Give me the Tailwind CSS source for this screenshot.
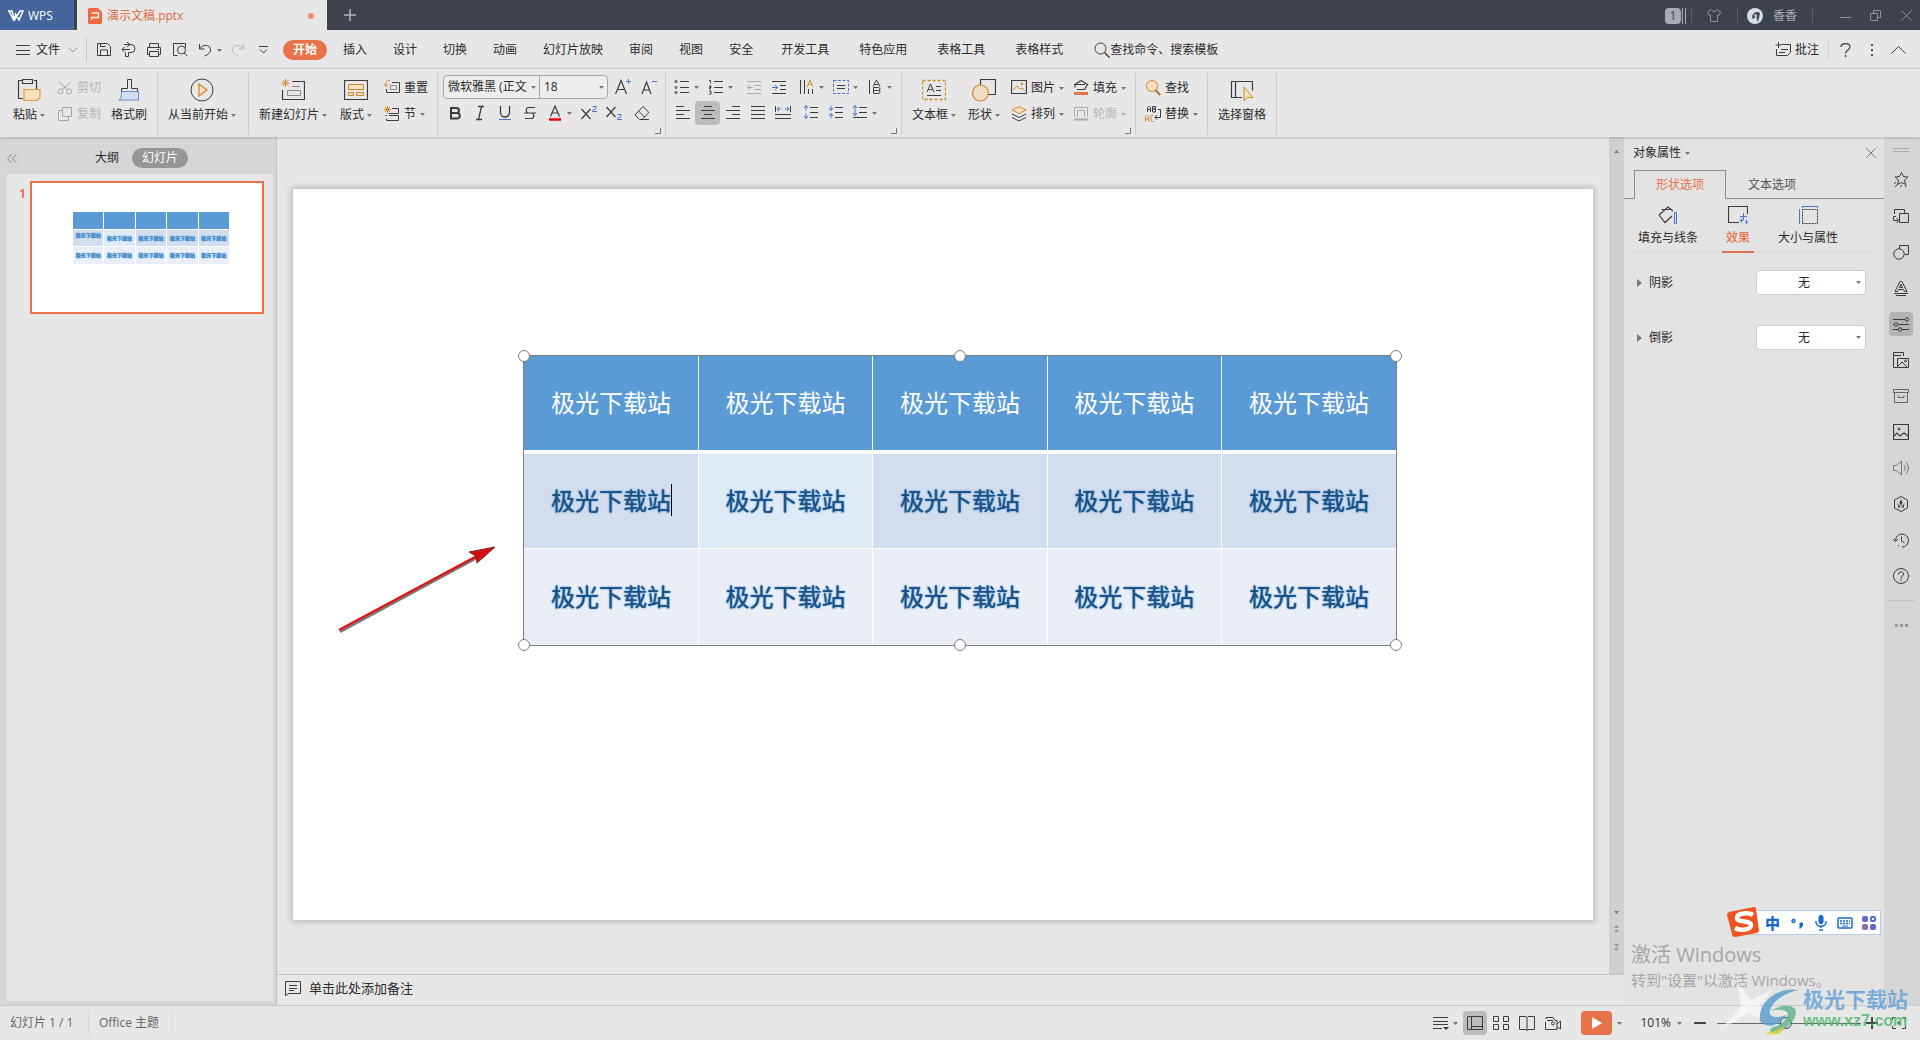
<!DOCTYPE html>
<html lang="zh-CN">
<head>
<meta charset="utf-8">
<title>演示文稿.pptx - WPS</title>
<script src="https://cdn.jsdelivr.net/npm/@tailwindcss/browser@4"></script>
</head>
<body class="relative flex min-h-screen flex-col overflow-x-hidden bg-[#e7e7e7] fill-none stroke-[#3c3c3c] font-['Open_Sans','Noto_Sans_CJK_SC',sans-serif] text-xs leading-4 text-[#2b2b2b]">

<svg class="hidden">
  <symbol id="caret" viewBox="0 0 5 3"><path d="M0 0h5L2.5 3z" fill="#777" stroke="none"/></symbol>
  <symbol id="corner" viewBox="0 0 6 6"><path d="M5.500 0v5.500H0" stroke="#777"/></symbol>
</svg>

<!-- Title bar -->
<header class="flex h-[30px] shrink-0 items-center bg-[#3e424d] text-[#a9abb2]">
  <button class="flex h-full w-[74px] items-center gap-1 bg-[#46659c] pl-2 pt-px text-white stroke-white">
    <svg class="h-[11px] w-4" viewBox="0 0 16 11" stroke-width="1.500"><path d="M0 1h4l2.500 9L12 1h3l-4 9-4-7M1 1l4.500 9L8 5"/></svg>
    WPS
  </button>
  <div class="ml-[3px] flex h-full w-[250px] items-center bg-[#e7e7e7] pl-[11px] pt-[2px] text-[#dc6b45]">
    <svg class="h-4 w-[14px]" viewBox="0 0 14 16"><path d="M1 0h9l4 4v11l-1 1H1l-1-1V1z" fill="#f0683e" stroke="none"/><path d="M3.500 5h7v4.500h-7V12" stroke="#fff" stroke-width="1.300"/></svg>
    <span class="ml-[5px]">演示文稿.pptx</span>
    <span class="ml-auto mr-[13px] size-1.5 rounded-full bg-[#f0905c]"></span>
  </div>
  <button class="ml-[17px]" aria-label="新建"><svg class="size-3 stroke-[#b5b7bd]" viewBox="0 0 12 12" stroke-width="1.500"><path d="M6 0v12M0 6h12"/></svg></button>
  <div class="ml-auto flex h-full items-center stroke-[#8f929b] pt-px">
    <span class="h-4 w-4 rounded-sm bg-[#a8abb2] text-center text-[#3e424d]">1</span>
    <span class="ml-px h-4 w-1 border-x border-[#a8abb2]"></span>
    <span class="ml-[5px] h-[15px] w-px bg-[#5b5f69]"></span>
    <svg class="ml-[15px] h-[13px] w-[14px]" viewBox="0 0 14 13"><path d="M4 .500C5 3 9 3 10 .500l3.500 2.500-1 3h-2v6.500h-7V6h-2l-1-3z"/></svg>
    <span class="ml-4 h-[15px] w-px bg-[#5b5f69]"></span>
    <svg class="ml-[9px] size-4" viewBox="0 0 16 16"><circle cx="8" cy="8" r="8" fill="#d6dfe2" stroke="none"/><path d="M5 9c1-5 5-6 8-4l-1 5-1 4c-1-2-2-4-1-6l-4 3z" fill="#444a55" stroke="none"/><circle cx="8.500" cy="7.500" r="1.500" fill="#e8b8b0" stroke="none"/></svg>
    <span class="ml-[10px]">香香</span>
    <span class="ml-[15px] h-[15px] w-px bg-[#5b5f69]"></span>
    <button class="ml-[27px]" aria-label="最小化"><svg class="h-[11px] w-[11px]" viewBox="0 0 11 11"><path d="M0 7.500h11"/></svg></button>
    <button class="ml-[19px]" aria-label="还原"><svg class="h-[11px] w-[11px]" viewBox="0 0 11 11"><path d="M.500 3.500h7v7h-7zM3.500 3.500v-3h7v7h-3"/></svg></button>
    <button class="ml-5 mr-2" aria-label="关闭"><svg class="h-[11px] w-[11px]" viewBox="0 0 11 11"><path d="M.500.500l10 10M10.500.500l-10 10"/></svg></button>
  </div>
</header>

<!-- Menu bar -->
<nav class="flex h-[39px] shrink-0 items-center border-b border-[#cfcfcf] pl-4 pt-[2px]">
  <button class="flex items-center gap-1.5"><svg class="h-[10px] w-[14px]" viewBox="0 0 14 10"><path d="M0 .500h14M0 5.500h14M0 9.500h14"/></svg>文件<svg class="ml-[2px] h-[6px] w-[10px] stroke-[#999]" viewBox="0 0 10 6"><path d="M.500.500L5 5 9.500.500"/></svg></button>
  <span class="ml-[8px] h-6 w-px bg-[#c8c8c8]"></span>
  <button class="ml-[9px]" aria-label="保存"><svg class="size-4" viewBox="0 0 16 16"><path d="M1.500 1.500h10l3 3v9h-13zM4.500 13V8h7v5M4.500 1.500v3h5"/></svg></button>
  <button class="ml-[9px]" aria-label="输出"><svg class="size-4" viewBox="0 0 16 16"><path d="M3 2.500h7a4 4 0 010 8H7.500v4h-3v-4M6 0l3 2.500L6 5M1 7.500h8M3.500 5L1 7.500 3.500 10"/></svg></button>
  <button class="ml-[9px]" aria-label="打印"><svg class="size-4" viewBox="0 0 16 16"><path d="M3.500 5V1.500h9V5M3.500 12.500h-2v-7h13v7h-2M3.500 9.500h9v5h-9zM11 7.500h2"/></svg></button>
  <button class="ml-[10px]" aria-label="打印预览"><svg class="size-4" viewBox="0 0 16 16"><path d="M5.500 13.500h-4v-12h12v4M12 11l3.500 3"/><circle cx="9.500" cy="8" r="4"/></svg></button>
  <button class="ml-[9px] flex items-center gap-[4px]" aria-label="撤销"><svg class="size-4" viewBox="0 0 16 16"><path d="M2.500 2v5h5M2.500 7c3-5 11-5 11 1 0 3-3 5-6 6"/></svg><svg class="h-[3px] w-[5px]"><use href="#caret"/></svg></button>
  <button class="ml-[9px]" aria-label="恢复"><svg class="size-4 stroke-[#bbb]" viewBox="0 0 16 16"><path d="M12.500 2v5h-5M12.500 7C9.500 2 1.500 2 1.500 8c0 3 3 5 6 6"/></svg></button>
  <button class="ml-[12px]" aria-label="自定义"><svg class="h-[8px] w-[9px]" viewBox="0 0 9 8"><path d="M0 .500h9M1 3.500l3.500 3.500L8 3.500"/></svg></button>
  <button class="ml-[15px] h-5 w-11 rounded-full bg-[#e8734a] font-bold text-white">开始</button>
  <div class="ml-4 flex gap-[26px]"><button>插入</button><button>设计</button><button>切换</button><button>动画</button><button>幻灯片放映</button><button>审阅</button><button>视图</button><button>安全</button></div>
  <div class="ml-7 flex gap-[30px]"><button>开发工具</button><button>特色应用</button><button>表格工具</button><button>表格样式</button></div>
  <button class="ml-[31px] flex items-center"><svg class="size-4" viewBox="0 0 16 16"><circle cx="6.500" cy="6.500" r="5.500"/><path d="M10.500 10.500l5 5" stroke-width="1.500"/></svg>查找命令、搜索模板</button>
  <div class="ml-auto flex items-center pr-[14px]">
    <button class="flex items-center gap-1"><svg class="size-4" viewBox="0 0 16 16"><path d="M6 2.500h9.500v8l-3 3H1.500V7M3.500 0v6M.500 3H6M6 7.500h7M4 10.500h6"/></svg>批注</button>
    <span class="ml-[9px] h-5 w-px bg-[#cfcfcf]"></span>
    <button class="ml-[11px]" aria-label="帮助"><svg class="h-[14px] w-[11px]" viewBox="0 0 11 14" stroke-width="1.200"><path d="M1 4c0-4.500 9-4.500 9 0 0 3-4.500 3-4.500 6.500M5.500 12v2"/></svg></button>
    <button class="ml-[20px]" aria-label="更多"><svg class="h-3 w-[2px]" viewBox="0 0 2 12"><path d="M0 0h2v2H0zM0 5h2v2H0zM0 10h2v2H0z" fill="#555" stroke="none"/></svg></button>
    <button class="ml-[18px]" aria-label="收起功能区"><svg class="h-[8px] w-[15px]" viewBox="0 0 15 8"><path d="M.500 7.500l7-7 7 7"/></svg></button>
  </div>
</nav>

<!-- Ribbon -->
<div class="relative z-10 flex h-[68px] shrink-0 items-start bg-[#e7e7e7] pt-1 shadow-[0_1px_3px_rgba(0,0,0,0.2)]">
  <div class="flex h-[62px] w-[158px] border-r border-[#cdcdcd] pl-[13px]">
    <button class="flex flex-col items-center gap-[5px] pt-[5px]"><svg class="size-6" viewBox="0 0 24 24" stroke-width="1.200"><path d="M5 2.500H1.500v18H6M17 2.500h2.500V11M5.500 1.500h10v4h-10z"/><path d="M7 11.500h16v8l-3 3H7z" fill="#f8dfc0" stroke="#d99a45"/></svg><span class="flex items-center gap-[3px]">粘贴<svg class="h-[3px] w-[5px]"><use href="#caret"/></svg></span></button>
    <div class="ml-3 flex flex-col gap-[2px] pt-[3px] text-[#b5b5b5] stroke-[#a5a5a5]">
      <button class="flex h-6 items-center gap-1"><svg class="size-4" viewBox="0 0 16 16"><circle cx="3.500" cy="11.500" r="2.500"/><circle cx="12" cy="11.500" r="2.500"/><path d="M2 2l8.500 7.500M14 2L5 9.500"/></svg>剪切</button>
      <button class="flex h-6 items-center gap-1"><svg class="size-4" viewBox="0 0 16 16"><path d="M5.500 1.500h9v9h-9zM5.500 4.500h-4v10h10v-4"/></svg>复制</button>
    </div>
    <button class="ml-[10px] flex flex-col items-center gap-[5px] pt-[5px]"><svg class="size-6" viewBox="0 0 24 24"><path d="M4.500 13.500h17v8.500H2c2-2 2.500-4 2.500-8.500z" fill="#cfe0f2" stroke="#6c8fc9"/><path d="M4.500 13.500v-3h6v-9h4v9h6v3"/></svg>格式刷</button>
  </div>
  <div class="flex h-[62px] w-[91px] border-r border-[#cdcdcd] pl-[10px]">
    <button class="flex flex-col items-center gap-[5px] pt-[5px]"><svg class="size-6" viewBox="0 0 24 24"><circle cx="12" cy="12" r="11"/><path d="M9 6v12l8-6z" fill="#f8dfc0" stroke="#d08a2c" stroke-width="1.300"/></svg><span class="flex items-center gap-[3px]">从当前开始<svg class="h-[3px] w-[5px]"><use href="#caret"/></svg></span></button>
  </div>
  <div class="flex h-[62px] w-[189px] border-r border-[#cdcdcd] pl-[10px]">
    <button class="flex flex-col items-center gap-[5px] pt-[5px]"><svg class="size-6" viewBox="0 0 24 24"><path d="M11 3.500h12.500v18h-22V12" stroke-width="1.200"/><path d="M6.500 12.500h13v5h-13zM11 8.500h8" stroke="#888"/><path d="M4.500 1v8M.500 5h8M1.500 2l6 6M7.500 2l-6 6" stroke="#d08a2c"/></svg><span class="flex items-center gap-[3px]">新建幻灯片<svg class="h-[3px] w-[5px]"><use href="#caret"/></svg></span></button>
    <button class="ml-[13px] flex flex-col items-center gap-[5px] pt-[5px]"><svg class="size-6" viewBox="0 0 24 24"><path d="M.500 2.500h23v19H.500z" stroke-width="1.200"/><path d="M4.500 6.500h15v5h-15zM4.500 14.500h5v3h-5zM12.500 14.500h7v3h-7z" fill="#f8dfc0" stroke="#d08a2c"/></svg><span class="flex items-center gap-[3px]">版式<svg class="h-[3px] w-[5px]"><use href="#caret"/></svg></span></button>
    <div class="ml-3 flex flex-col gap-[2px] pt-[3px]">
      <button class="flex h-6 items-center gap-1"><svg class="size-4" viewBox="0 0 16 16"><path d="M8 2.500h7.500v10h-13V9"/><path d="M6.500 5.500h6v4h-6z" stroke="#888"/><path d="M6 .500C3 0 1.500 2 2 6M0 4l2 2.500L4.500 4" stroke="#d08a2c"/></svg>重置</button>
      <button class="flex h-6 items-center gap-1"><svg class="size-4" viewBox="0 0 16 16"><path d="M8 2.500h6.500v5H5M1.500 9.500H3M5 9.500h9.500v5h-12v-2"/><path d="M3.500 0v7M0 3.500h7M1 1l5 5M6 1L1 6" stroke="#d08a2c"/></svg>节<svg class="h-[3px] w-[5px]"><use href="#caret"/></svg></button>
    </div>
  </div>
  <!-- Font -->
  <div class="relative flex h-[62px] w-[228px] flex-col gap-[2px] border-r border-[#cdcdcd] pl-[5px] pt-[2px]">
    <div class="flex h-6 items-center">
      <div class="flex h-6 w-[165px] rounded border border-[#a8a8a8] bg-[#ededed]">
        <label class="relative flex w-24 items-center border-r border-[#a8a8a8]"><select aria-label="字体" class="w-full appearance-none overflow-hidden pl-1 pr-3 text-xs outline-none"><option>微软雅黑 (正文</option></select><svg class="absolute right-[3px] h-[3px] w-[5px]"><use href="#caret"/></svg></label>
        <label class="relative flex flex-1 items-center"><select aria-label="字号" class="w-full appearance-none pl-1 text-xs outline-none"><option>18</option></select><svg class="absolute right-[3px] h-[3px] w-[5px]"><use href="#caret"/></svg></label>
      </div>
      <button class="ml-[7px]" aria-label="增大字号"><svg class="size-4" viewBox="0 0 16 16"><path d="M.500 15L6 1.500 11.500 15M2.500 10.500h7" stroke-width="1.200"/><path d="M13.500 0v5M11 2.500h5" stroke="#4a76cf"/></svg></button>
      <button class="ml-[10px]" aria-label="减小字号"><svg class="size-4" viewBox="0 0 16 16"><path d="M1 15L5.500 3 10 15M2.500 11h6" stroke-width="1.200"/><path d="M11 2.500h5" stroke="#4a76cf"/></svg></button>
    </div>
    <div class="-ml-px flex h-6 items-center">
      <button class="grid h-6 w-[25px] place-items-center" aria-label="加粗"><svg class="size-4" viewBox="0 0 16 16"><path d="M4 3h5.500a2.500 2.500 0 010 5H4h6a2.500 2.500 0 010 5.500H4z" stroke-width="2"/></svg></button>
      <button class="grid h-6 w-[25px] place-items-center" aria-label="倾斜"><svg class="size-4" viewBox="0 0 16 16"><path d="M6 1.500h6M4 14.500h6M9.500 1.500l-3 13" stroke-width="1.300"/></svg></button>
      <button class="grid h-6 w-[25px] place-items-center" aria-label="下划线"><svg class="size-4" viewBox="0 0 16 16"><path d="M3.500 1v6.500a4.500 4.500 0 009 0V1" stroke-width="1.300"/><path d="M2 14.500h12" stroke="#4a76cf"/></svg></button>
      <button class="grid h-6 w-[25px] place-items-center" aria-label="删除线"><svg class="size-4" viewBox="0 0 16 16"><path d="M13 2.500H6a3 3 0 000 5.500h4a3 3 0 010 5.500H3M2 8h12" stroke-width="1.200"/></svg></button>
      <button class="grid h-6 w-[25px] place-items-center" aria-label="字体颜色"><svg class="size-4" viewBox="0 0 16 16"><path d="M3.500 11.500L8 1l4.500 10.500M5 8h6" stroke-width="1.200"/><path d="M2 14.500h12" stroke="#e00" stroke-width="2.500"/></svg></button>
      <button class="w-2" aria-label="更多颜色"><svg class="h-[3px] w-[5px]"><use href="#caret"/></svg></button>
      <button class="ml-px grid h-6 w-[25px] place-items-center" aria-label="上标"><svg class="size-4" viewBox="0 0 16 16"><path d="M.500 4l9 10M9.500 4l-9 10" stroke-width="1.200"/><path d="M11.500 1.500h3.500v2l-3.500 2v1H16" stroke="#4a76cf"/></svg></button>
      <button class="grid h-6 w-[25px] place-items-center" aria-label="下标"><svg class="size-4" viewBox="0 0 16 16"><path d="M.500 2l9 10M9.500 2l-9 10" stroke-width="1.200"/><path d="M11.500 9.500h3.500v2l-3.500 2v1H16" stroke="#4a76cf"/></svg></button>
      <button class="ml-[3px] grid h-6 w-[25px] place-items-center" aria-label="清除格式"><svg class="size-4" viewBox="0 0 16 16"><path d="M9 1.500l6 6-7 7H5.500L1 10zM4.500 6l6 6M6 14.500h9"/></svg></button>
    </div>
    <svg class="absolute bottom-[1px] right-1 size-1.5"><use href="#corner"/></svg>
  </div>
  <!-- Paragraph -->
  <div class="relative flex h-[62px] w-[236px] flex-col gap-[2px] border-r border-[#cdcdcd] pl-[4px] pt-[2px]">
    <div class="flex h-6 items-center pl-[2px]">
      <button class="flex h-6 w-[34px] items-center gap-1 pl-[2px]" aria-label="项目符号"><svg class="size-4" viewBox="0 0 16 16"><path d="M6 2.500h9M6 8.500h9M6 13.500h9" stroke-width="1.200"/><circle cx="2" cy="2.500" r="1"/><circle cx="2" cy="8.500" r="1"/><circle cx="2" cy="13.500" r="1"/></svg><svg class="h-[3px] w-[5px]"><use href="#caret"/></svg></button>
      <button class="flex h-6 w-[34px] items-center gap-1 pl-[2px]" aria-label="编号"><svg class="size-4" viewBox="0 0 16 16"><path d="M6 2.500h9M6 8.500h9M6 13.500h9" stroke-width="1.200"/><path d="M1 1.500h1.500v3M1 7h2v1.500H1.500V10H3M1 12h2v3H1"/></svg><svg class="h-[3px] w-[5px]"><use href="#caret"/></svg></button>
      <button class="ml-px grid h-6 w-[25px] place-items-center" aria-label="减少缩进"><svg class="size-4 stroke-[#aaa]" viewBox="0 0 16 16"><path d="M1 2.500h14M8 6.500h7M8 10.500h7M1 14.500h14M1 8.500h6M4 6L1.500 8.500 4 11"/></svg></button>
      <button class="grid h-6 w-[25px] place-items-center" aria-label="增加缩进"><svg class="size-4" viewBox="0 0 16 16"><path d="M1 2.500h14M9 6.500h6M9 10.500h6M1 14.500h14"/><path d="M1 8.500h6M4 6l2.500 2.500L4 11" stroke="#4a76cf"/></svg></button>
      <button class="ml-1.5 flex h-6 w-[34px] items-center gap-1 pl-[2px]" aria-label="文字方向"><svg class="size-4" viewBox="0 0 16 16"><path d="M1.500 1v14M5.500 1v14M9.500 10v5M13.500 10v5"/><path d="M8 8l3-7 3 7M9 5.500h4" stroke="#d08a2c"/></svg><svg class="h-[3px] w-[5px]"><use href="#caret"/></svg></button>
      <button class="flex h-6 w-[34px] items-center gap-1 pl-[2px]" aria-label="对齐文本"><svg class="size-4" viewBox="0 0 16 16"><path d="M.500 1.500h15v13H.500z" stroke="#4a76cf" stroke-dasharray="3 1.500"/><path d="M4 6.500h8M4 9.500h8"/></svg><svg class="h-[3px] w-[5px]"><use href="#caret"/></svg></button>
      <button class="flex h-6 w-[34px] items-center gap-1 pl-[2px]" aria-label="字符间距"><svg class="size-4" viewBox="0 0 16 16"><path d="M2.500 1v14M6 7.500l3.500-6.500L13 7.500M7.500 5.500h4M6.500 8.500h5a1.500 1.500 0 010 3h-5 5a1.500 1.500 0 010 3h-5z"/></svg><svg class="h-[3px] w-[5px]"><use href="#caret"/></svg></button>
    </div>
    <div class="flex h-6 items-center">
      <button class="grid h-6 w-[25px] place-items-center" aria-label="左对齐"><svg class="size-4" viewBox="0 0 16 16" stroke-width="1.200"><path d="M1 1.500h8M1 5.500h14M1 9.500h8M1 13.500h14"/></svg></button>
      <button class="grid h-6 w-[25px] place-items-center rounded bg-[#bcbcbc]" aria-label="居中"><svg class="size-4" viewBox="0 0 16 16" stroke-width="1.200"><path d="M4 1.500h8M1 5.500h14M4 9.500h8M1 13.500h14"/></svg></button>
      <button class="grid h-6 w-[25px] place-items-center" aria-label="右对齐"><svg class="size-4" viewBox="0 0 16 16" stroke-width="1.200"><path d="M7 1.500h8M1 5.500h14M7 9.500h8M1 13.500h14"/></svg></button>
      <button class="grid h-6 w-[25px] place-items-center" aria-label="两端对齐"><svg class="size-4" viewBox="0 0 16 16" stroke-width="1.200"><path d="M1 1.500h14M1 5.500h14M1 9.500h14M1 13.500h14"/></svg></button>
      <button class="grid h-6 w-[25px] place-items-center" aria-label="分散对齐"><svg class="size-4" viewBox="0 0 16 16"><path d="M.500 1v6M15.500 1v6M0 9.500h16M0 13.500h16"/><path d="M2 4h4M4 2L2 4l2 2M14 4h-4M12 2l2 2-2 2" stroke="#4a76cf"/></svg></button>
      <button class="ml-[3px] grid h-6 w-[25px] place-items-center" aria-label="增大段距"><svg class="size-4" viewBox="0 0 16 16"><path d="M7 2.500h8M7 7.500h8M7 12.500h8"/><path d="M3 .500v5M1 3L3 .500 5 3M3 8.500v5M1 11l2 2.500L5 11" stroke="#4a76cf"/></svg></button>
      <button class="grid h-6 w-[25px] place-items-center" aria-label="减小段距"><svg class="size-4" viewBox="0 0 16 16"><path d="M7 2.500h8M7 7.500h8M7 12.500h8"/><path d="M3 .500v5M1 3l2 2.500L5 3M3 8.500v5M1 11l2-2.500L5 11" stroke="#4a76cf"/></svg></button>
      <button class="flex h-6 items-center gap-1 pl-1" aria-label="行距"><svg class="size-4" viewBox="0 0 16 16"><path d="M7 2.500h8M7 7.500h8M1 12.500h14"/><path d="M3 .500v10M1 3L3 .500 5 3M1 8l2 2.500L5 8" stroke="#4a76cf"/></svg><svg class="h-[3px] w-[5px]"><use href="#caret"/></svg></button>
    </div>
    <svg class="absolute bottom-[1px] right-1 size-1.5"><use href="#corner"/></svg>
  </div>
  <div class="relative flex h-[62px] w-[234px] border-r border-[#cdcdcd] pl-[10px]">
    <button class="flex flex-col items-center gap-[5px] pt-[5px]"><svg class="size-6" viewBox="0 0 24 24"><path d="M.500 2.500h23v19H.500z" stroke="#d08a2c" stroke-dasharray="3 2" stroke-width="1.300"/><path d="M5 14l3.500-8 3.500 8M6.500 11.500h4M14 8.500h5M14 12.500h5M5 17.500h14"/></svg><span class="flex items-center gap-[3px]">文本框<svg class="h-[3px] w-[5px]"><use href="#caret"/></svg></span></button>
    <button class="ml-3 flex flex-col items-center gap-[5px] pt-[5px]"><svg class="size-6" viewBox="0 0 24 24" stroke-width="1.200"><path d="M8.500 1.500h15v15h-15z"/><circle cx="8.500" cy="15" r="8" fill="#f0dcc6" stroke="#d08a2c"/></svg><span class="flex items-center gap-[3px]">形状<svg class="h-[3px] w-[5px]"><use href="#caret"/></svg></span></button>
    <div class="ml-[11px] flex flex-col gap-[2px] pt-[3px]">
      <button class="flex h-6 items-center gap-1"><svg class="size-4" viewBox="0 0 16 16"><path d="M.500 .500h15v13H.500z" stroke-width="1.200"/><path d="M2 10l4-4 3 3 2-1 3 3" stroke="#d08a2c"/><circle cx="11" cy="4" r="1" stroke="#d08a2c"/></svg>图片<svg class="h-[3px] w-[5px]"><use href="#caret"/></svg></button>
      <button class="flex h-6 items-center gap-1"><svg class="size-4" viewBox="0 0 16 16"><path d="M8 .500l7 3.500-7 3.500L1 4z" fill="#f8dfc0" stroke="#d08a2c"/><path d="M1 8l7 3.500L15 8M1 11.500L8 15l7-3.500"/></svg>排列<svg class="h-[3px] w-[5px]"><use href="#caret"/></svg></button>
    </div>
    <div class="ml-[9px] flex flex-col gap-[2px] pt-[3px]">
      <button class="flex h-6 items-center gap-1"><svg class="size-4" viewBox="0 0 16 16"><path d="M4 9.500h7.500l3-5L8 .500 2 4.500M1 4.500h11M2 4.500v3" stroke-width="1.200"/><path d="M1 13.500h14" stroke="#e8734a" stroke-width="3"/></svg>填充<svg class="h-[3px] w-[5px]"><use href="#caret"/></svg></button>
      <button class="flex h-6 items-center gap-1 text-[#b5b5b5]"><svg class="size-4 stroke-[#aaa]" viewBox="0 0 16 16"><path d="M1.500 11V1.500h13V11M4.500 11V4.500h7V11"/><path d="M1 13.500h14" stroke-width="2"/></svg>轮廓<svg class="h-[3px] w-[5px] opacity-50"><use href="#caret"/></svg></button>
    </div>
    <svg class="absolute bottom-[1px] right-1 size-1.5"><use href="#corner"/></svg>
  </div>
  <div class="flex h-[62px] w-[72px] flex-col gap-[2px] border-r border-[#cdcdcd] pl-[9px] pt-[3px]">
    <button class="flex h-6 items-center gap-1"><svg class="size-4" viewBox="0 0 16 16"><circle cx="7" cy="6" r="5.500" fill="#f8dfc0" stroke="#d08a2c"/><path d="M10.500 10l4.500 5" stroke="#a3763b" stroke-width="2"/></svg>查找</button>
    <button class="flex h-6 items-center gap-1"><svg class="size-4" viewBox="0 0 16 16"><path d="M2.500 6V1.500l1-1h1l1 1V6M2.500 3.500h3M7.500.500h3v2.500h-3 3V6h-3zM13 3.500h2.500v8H10M12 9l-2 2.500 2 2"/><path d="M.500 15.500v-5l1-1h1l1 1v5M.500 13h3M8.500 9.500H6v6h2.500" stroke="#d08a2c"/></svg>替换<svg class="h-[3px] w-[5px]"><use href="#caret"/></svg></button>
  </div>
  <div class="flex h-[62px] w-[69px] border-r border-[#cdcdcd] pl-[10px]">
    <button class="flex flex-col items-center gap-[5px] pt-[5px]"><svg class="size-6" viewBox="0 0 24 24"><path d="M12 19.500H1.500v-16h21v9M5.500 3.500v16" stroke-width="1.200"/><path d="M14 9v14l3.500-3.500H23z" fill="#f8dfc0" stroke="#d08a2c"/></svg>选择窗格</button>
  </div>
</div>

<!-- Work area -->
<main class="flex flex-1">
  <!-- Slide list -->
  <aside class="flex w-[277px] shrink-0 flex-col border-r border-[#bfbfbf] bg-[#d6d6d6] pb-1 pl-[7px] pr-[3px]">
    <div class="flex h-[37px] items-center pt-[5px]">
      <button aria-label="收起"><svg class="h-[9px] w-[10px] stroke-[#888]" viewBox="0 0 10 9"><path d="M4.500 0L.500 4.500l4 4.500M9.500 0l-4 4.500 4 4.500"/></svg></button>
      <button class="ml-[78px]">大纲</button>
      <button class="ml-[13px] h-5 w-14 rounded-full bg-[#969696] text-white">幻灯片</button>
    </div>
    <div class="flex flex-1 items-start bg-[#e7e7e7] pt-[7px]">
      <span class="w-[23px] pl-3 pt-[5px] font-bold text-[#e8734a]">1</span>
      <div class="h-[133px] w-[234px] border-2 border-[#e8734a] bg-white pl-[41px] pt-[29px]">
        <div class="grid w-[156px] grid-cols-5 gap-px text-center text-[5px] font-black leading-[16px] text-[#4a8fd0] [text-shadow:0_0_1px_#4a8fd0]">
          <div class="h-[17px] bg-[#5b9bd5]"></div><div class="bg-[#5b9bd5]"></div><div class="bg-[#5b9bd5]"></div><div class="bg-[#5b9bd5]"></div><div class="bg-[#5b9bd5]"></div>
          <div class="h-4 bg-[#d2deef] leading-[11px]">极光下载站</div><div class="bg-[#deeaf6]">极光下载站</div><div class="bg-[#d2deef]">极光下载站</div><div class="bg-[#d2deef]">极光下载站</div><div class="bg-[#d2deef]">极光下载站</div>
          <div class="h-[17px] bg-[#eaeff7]">极光下载站</div><div class="bg-[#eaeff7]">极光下载站</div><div class="bg-[#eaeff7]">极光下载站</div><div class="bg-[#eaeff7]">极光下载站</div><div class="bg-[#eaeff7]">极光下载站</div>
        </div>
      </div>
    </div>
  </aside>

  <!-- Canvas and notes -->
  <section class="flex min-w-0 flex-1 flex-col">
    <div class="flex flex-1">
      <div class="min-w-0 flex-1 px-4 pt-[52px]">
        <div class="relative aspect-video w-full bg-white shadow-[0_0_6px_2px_rgba(0,0,0,0.2)]">
          <div class="absolute left-[230px] top-[166px] w-[874px] border border-[#7f7f7f]">
            <table class="w-full table-fixed border-collapse text-center text-2xl font-normal">
              <thead><tr class="h-24 border-b-4 border-white bg-[#5b9bd5] text-white">
                <th class="border-r border-white font-normal">极光下载站</th><th class="border-r border-white font-normal">极光下载站</th><th class="border-r border-white font-normal">极光下载站</th><th class="border-r border-white font-normal">极光下载站</th><th class="font-normal">极光下载站</th>
              </tr></thead>
              <tbody class="text-[#1b5085] [text-shadow:0_0_1px_#2f74ae,0_0_2px_#5b9bd5]">
                <tr class="h-24 border-b border-white bg-[#d2ddee]">
                  <td class="border-r border-white"><span class="relative">极光下载站<i class="absolute -right-px top-0 h-8 w-px bg-black"></i></span></td><td class="border-r border-white bg-[#deeaf6]">极光下载站</td><td class="border-r border-white">极光下载站</td><td class="border-r border-white">极光下载站</td><td>极光下载站</td>
                </tr>
                <tr class="h-[97px] bg-[#e9eef7]">
                  <td class="border-r border-white">极光下载站</td><td class="border-r border-white">极光下载站</td><td class="border-r border-white">极光下载站</td><td class="border-r border-white">极光下载站</td><td>极光下载站</td>
                </tr>
              </tbody>
            </table>
            <i class="absolute -left-1.5 -top-1.5 size-3 rounded-full border border-[#7f7f7f] bg-white"></i>
            <i class="absolute -top-1.5 left-1/2 size-3 -translate-x-1/2 rounded-full border border-[#7f7f7f] bg-white"></i>
            <i class="absolute -right-1.5 -top-1.5 size-3 rounded-full border border-[#7f7f7f] bg-white"></i>
            <i class="absolute -bottom-1.5 -left-1.5 size-3 rounded-full border border-[#7f7f7f] bg-white"></i>
            <i class="absolute -bottom-1.5 left-1/2 size-3 -translate-x-1/2 rounded-full border border-[#7f7f7f] bg-white"></i>
            <i class="absolute -bottom-1.5 -right-1.5 size-3 rounded-full border border-[#7f7f7f] bg-white"></i>
          </div>
          <svg class="absolute left-[44px] top-[354px] h-[92px] w-[162px]" viewBox="0 0 162 92"><path d="M3 89L140 15" stroke="#777" stroke-width="2"/><path d="M2 87L140 13" stroke="#e01010" stroke-width="2.500"/><path d="M158 4L132 9l7 4 1 7z" fill="#d80f0f" stroke="#7a2020"/></svg>
        </div>
      </div>
      <div class="flex w-[15px] flex-col items-center bg-[#cfcfcf] pb-[23px] pt-[13px]">
        <svg class="h-[3px] w-[5px] rotate-180"><use href="#caret"/></svg>
        <svg class="mt-auto h-[3px] w-[5px]"><use href="#caret"/></svg>
        <svg class="mt-[11px] h-[7px] w-[5px] rotate-180" viewBox="0 0 5 7"><path d="M0 0h5L2.500 3zM0 4h5L2.500 7z" fill="#999" stroke="none"/></svg>
        <svg class="mt-3 h-[7px] w-[5px]" viewBox="0 0 5 7"><path d="M0 0h5L2.500 3zM0 4h5L2.500 7z" fill="#999" stroke="none"/></svg>
      </div>
    </div>
    <div class="flex h-[31px] items-center gap-2 border-t border-[#c4c4c4] pb-1 pl-2 text-[13px]">
      <svg class="size-4" viewBox="0 0 16 16"><path d="M.500 1.500h15v12H4l-3.500 2zM4 5.500h8M4 8.500h8M4 10.500h5"/></svg>单击此处添加备注
    </div>
  </section>

  <!-- Object properties -->
  <aside class="flex w-[260px] shrink-0 flex-col bg-[#e3e3e3]">
    <div class="flex items-center gap-1 pl-[9px] pr-2 pt-2">对象属性<svg class="h-[3px] w-[5px]"><use href="#caret"/></svg><button class="ml-auto" aria-label="关闭面板"><svg class="size-[10px] stroke-[#777]" viewBox="0 0 10 10"><path d="M.500.500l9 9M9.500.500l-9 9"/></svg></button></div>
    <div class="mt-[9px] flex h-[29px]">
      <span class="w-[10px] border-b border-[#8c8c8c]"></span>
      <button class="w-[92px] border-x border-t border-[#8c8c8c] text-[#e8734a]">形状选项</button>
      <div class="flex-1 border-b border-[#8c8c8c] pl-[22px] pt-[7px] text-[#555]"><button>文本选项</button></div>
    </div>
    <div class="mx-[10px] flex h-[54px] items-start border-b border-[#d8d8d8]">
      <button class="ml-1 flex h-[54px] flex-col items-center gap-[6px] pt-[7px]"><svg class="h-[18px] w-5" viewBox="0 0 20 18"><path d="M3.500 3.500h10M1 9l9-8 5 4M1 9l6 7.500 7-6.500" stroke-width="1.200"/><path d="M16.500 6.500h2v11h-2z" fill="#cfe0f2" stroke="#4a76cf"/></svg>填充与线条</button>
      <button class="ml-6 flex h-[54px] w-8 flex-col items-center gap-[6px] border-b-2 border-[#e07350] pt-[7px] font-medium text-[#e8734a]"><svg class="h-[18px] w-5" viewBox="0 0 20 18"><path d="M11 16.500H.500V.500h19V8" stroke-width="1.200"/><path d="M15.500 7v7M12 10.500h7M13.500 12.500v4M11.500 14.500h4M18.500 14v4M17 16h3" stroke="#4a76cf"/></svg>效果</button>
      <button class="ml-6 flex h-[54px] flex-col items-center gap-[6px] pt-[7px]"><svg class="h-[18px] w-5" viewBox="0 0 20 18"><path d="M4.500 3.500h15v14h-15z" stroke-dasharray="2 1"/><path d="M4 .500h16M1.500 3v15M4.500 0v2M19.500 0v2" stroke="#4a76cf"/></svg>大小与属性</button>
    </div>
    <div class="mt-[17px] flex items-center pl-[13px] pr-[18px]">
      <svg class="h-2 w-[5px]" viewBox="0 0 5 8"><path d="M0 0l5 4-5 4z" fill="#777" stroke="none"/></svg><label for="shadow" class="ml-[7px]">阴影</label>
      <div class="relative ml-auto flex items-center"><select id="shadow" class="h-[25px] w-[110px] appearance-none rounded border border-[#cfcfcf] bg-white pl-[41px] text-xs outline-none"><option>无</option></select><svg class="absolute right-[5px] h-[3px] w-[5px]"><use href="#caret"/></svg></div>
    </div>
    <div class="mt-[30px] flex items-center pl-[13px] pr-[18px]">
      <svg class="h-2 w-[5px]" viewBox="0 0 5 8"><path d="M0 0l5 4-5 4z" fill="#777" stroke="none"/></svg><label for="reflection" class="ml-[7px]">倒影</label>
      <div class="relative ml-auto flex items-center"><select id="reflection" class="h-[25px] w-[110px] appearance-none rounded border border-[#cfcfcf] bg-white pl-[41px] text-xs outline-none"><option>无</option></select><svg class="absolute right-[5px] h-[3px] w-[5px]"><use href="#caret"/></svg></div>
    </div>
  </aside>

  <!-- Task pane strip -->
  <aside class="flex w-9 shrink-0 flex-col items-center gap-3 bg-[#d6d6d6] pr-[2px] pt-[11px]">
    <svg class="mb-1 h-1 w-4 stroke-[#aaa]" viewBox="0 0 16 4"><path d="M0 .500h16M0 3.500h16"/></svg>
    <button class="grid size-6 place-items-center" aria-label="动画"><svg class="size-4" viewBox="0 0 16 16"><path d="M8.500.500l2 4 4.500.500-3.500 3 1 4.500-4-2-4 2 1-4.500L2 5l4.500-.500zM1 12l2-2M2 15l3-3M7 15l2-2M12 15l2-2"/></svg></button>
    <button class="grid size-6 place-items-center" aria-label="切换"><svg class="size-4" viewBox="0 0 16 16"><path d="M1.500 6V1.500h10V5M6.500 5.500h9v9h-9zM3 8.500H.500v4H5M3.500 10L6 12.500 3.500 15"/></svg></button>
    <button class="grid size-6 place-items-center" aria-label="形状"><svg class="size-4" viewBox="0 0 16 16"><path d="M6.500 5V1.500h9v9H12"/><circle cx="6" cy="10" r="5.200"/></svg></button>
    <button class="grid size-6 place-items-center" aria-label="艺术字"><svg class="size-4" viewBox="0 0 16 16"><path d="M2 11.500L7 1.500h2l5 10h-2.500l-1-2h-5l-1 2zM6.500 7.500L8 4l1.500 3.500zM1 13.500h14M3 15.500h10"/></svg></button>
    <button class="grid size-6 place-items-center rounded bg-[#b3b3b3]" aria-label="属性"><svg class="size-4" viewBox="0 0 16 16"><path d="M0 3.500h12M0 8.500h1M5 8.500h11M0 13.500h5M9 13.500h7"/><circle cx="14" cy="3.500" r="1.700"/><circle cx="3" cy="8.500" r="1.700"/><circle cx="7" cy="13.500" r="1.700"/></svg></button>
    <button class="grid size-6 place-items-center" aria-label="图库"><svg class="size-4" viewBox="0 0 16 16"><path d="M4 15.500H.500V.500h10V4M.500 3.500H8M4.500 6.500h11v9h-11zM5 14l4-4 5 5"/><circle cx="12.500" cy="9" r="1"/></svg></button>
    <button class="grid size-6 place-items-center" aria-label="资源"><svg class="size-4 stroke-[#666]" viewBox="0 0 16 16"><path d="M.500 1.500h15v3H.500zM1.500 4.500v10h13v-10M5 7.500v2h6v-2"/></svg></button>
    <button class="grid size-6 place-items-center" aria-label="图片"><svg class="size-4" viewBox="0 0 16 16"><path d="M.500.500h15v15H.500zM1 12l3-3 3 3 4-3 4 3" stroke-width="1.200"/><circle cx="6" cy="5" r="1"/></svg></button>
    <button class="grid size-6 place-items-center" aria-label="声音"><svg class="size-4 stroke-[#777]" viewBox="0 0 16 16"><path d="M.500 5.500h3L8.500 1v14l-5-4.500h-3zM11 5c1.500 2 1.500 4 0 6M13 2c3 4 3 8 0 12"/></svg></button>
    <button class="grid size-6 place-items-center" aria-label="素材"><svg class="size-4" viewBox="0 0 16 16"><path d="M8 .500l6.500 3.500v8L8 15.500 1.500 12V4z"/><path d="M8 3.500l1.500 3L8 10 6.500 6.500zM4.500 7l3 4-2 1zM11.500 7l-3 4 2 1z" fill="#3c3c3c" stroke="none"/></svg></button>
    <button class="grid size-6 place-items-center" aria-label="历史"><svg class="size-4" viewBox="0 0 16 16"><path d="M2.500 8.500A6.500 6.500 0 119 15M5 13.500L6 14M0 7l2.500 2.500L5 7M8.500 4.500V9l3 2"/></svg></button>
    <button class="grid size-6 place-items-center" aria-label="帮助中心"><svg class="size-4" viewBox="0 0 16 16"><circle cx="8" cy="8" r="7.500"/><path d="M5.500 6.500c0-3.500 5-3.500 5-.500 0 2-2.500 2-2.500 4.500M8 11.500V13"/></svg></button>
    <span class="h-px w-7 bg-[#c2c2c2]"></span>
    <button class="mt-[11px]" aria-label="更多面板"><svg class="h-[3px] w-[13px]" viewBox="0 0 13 3"><path d="M0 0h3v3H0zM5 0h3v3H5zM10 0h3v3h-3z" fill="#999" stroke="none"/></svg></button>
  </aside>
</main>

<!-- Status bar -->
<footer class="flex h-[35px] shrink-0 items-center border-t border-[#c9c9c9] bg-[#e7e7e7] pl-[10px] text-[#666]">
  <span class="w-[66px]">幻灯片 1 / 1</span><span class="ml-3 h-6 w-px bg-[#d8d8d8]"></span>
  <span class="ml-[10px] w-[63px]">Office 主题</span><span class="ml-[10px] h-6 w-px bg-[#d8d8d8]"></span>
  <div class="ml-auto flex items-center pr-[14px] text-[#333]">
    <button class="flex items-center gap-1" aria-label="备注"><svg class="size-4" viewBox="0 0 16 16"><path d="M0 2.500h15M0 6.500h15M0 9.500h15M0 13.500h9" stroke-width="1.200"/><path d="M10 12h6l-3 3z" fill="#333" stroke="none"/></svg><svg class="h-[3px] w-[5px]"><use href="#caret"/></svg></button>
    <button class="ml-[5px] grid h-6 w-6 place-items-center rounded-sm bg-[#bcbcbc]" aria-label="普通视图"><svg class="size-4" viewBox="0 0 16 16"><path d="M.500 1.500h15v13H.500zM4.500 1.500v13M4.500 11.500h11"/></svg></button>
    <button class="ml-[6px]" aria-label="浏览"><svg class="size-4" viewBox="0 0 16 16"><path d="M.500 1.500h5v5h-5zM10.500 1.500h5v5h-5zM.500 9.500h5v5h-5zM10.500 9.500h5v5h-5z"/></svg></button>
    <button class="ml-[10px]" aria-label="阅读"><svg class="size-4" viewBox="0 0 16 16"><path d="M8 2.500v13M8 2.500l-1-1H.500v13H7l1 1 1-1h6.500v-13H9z"/></svg></button>
    <button class="ml-[10px]" aria-label="录制"><svg class="size-4" viewBox="0 0 16 16"><path d="M1 4V2.500h7l2 3H12v9H.500V7M12 9l3.500-3v8L12 12M2 5.500h6"/><circle cx="8" cy="8.500" r="1.500"/></svg></button>
    <button class="ml-5 grid h-6 w-[31px] place-items-center rounded bg-[#e8734a]" aria-label="放映"><svg class="ml-px h-3 w-[10px]" viewBox="0 0 10 12"><path d="M0 0l10 6-10 6z" fill="#fff" stroke="none"/></svg></button>
    <svg class="ml-[5px] h-[3px] w-[5px]"><use href="#caret"/></svg>
    <button class="ml-[18px] flex items-center gap-1.5">101%<svg class="h-[3px] w-[5px]"><use href="#caret"/></svg></button>
    <button class="ml-3 h-[2px] w-3 bg-[#444]" aria-label="缩小"></button>
    <input type="range" aria-label="缩放" min="0" max="100" value="48" class="ml-[11px] h-3 w-[144px] appearance-none bg-[linear-gradient(#666,#666)] bg-[length:100%_1px] bg-center bg-no-repeat [&::-webkit-slider-thumb]:size-3 [&::-webkit-slider-thumb]:appearance-none [&::-webkit-slider-thumb]:rounded-full [&::-webkit-slider-thumb]:border [&::-webkit-slider-thumb]:border-[#444] [&::-webkit-slider-thumb]:bg-[#e7e7e7]">
    <button class="ml-[5px]" aria-label="放大"><svg class="size-3 stroke-[#444]" viewBox="0 0 12 12" stroke-width="2"><path d="M6 0v12M0 6h12"/></svg></button>
    <button class="ml-[14px]" aria-label="适应窗口"><svg class="size-[14px]" viewBox="0 0 14 14"><path d="M.500 4V1.500H4M10 1.500h3.500V4M13.500 10v2.500H10M4 12.500H.500V10M5 7h4M7 5v4"/></svg></button>
  </div>
</footer>

<!-- Activation notice -->
<div class="pointer-events-none absolute bottom-[49px] right-[95px] z-20 w-[194px] whitespace-nowrap text-[#a6a6a6]">
  <p class="text-xl leading-7">激活 Windows</p>
  <p class="text-[15px] leading-[22px]">转到"设置"以激活 Windows。</p>
</div>

<!-- Input method bar -->
<div class="absolute bottom-[105px] right-[39px] z-20 flex h-[25px] w-[134px] items-center justify-end border border-[#b9cdea] bg-white pr-1 stroke-[#1769cf]">
  <svg class="absolute -left-[22px] -top-[6px] size-[34px]" viewBox="0 0 34 34"><path d="M3 7L28 2q2 0 2 2l3 21q0 2-2 3L9 32q-3 0-3-3L1 10q0-2 2-3z" fill="#f05322" stroke="none"/><path d="M27 10C22 7 11 8 11 13s14 2 14 7-11 6-16 3" stroke="#fff" stroke-width="4.500"/></svg>
  <span class="text-[15px] font-black leading-4 text-[#1769cf]">中</span>
  <svg class="ml-[11px] h-4 w-3 shrink-0" viewBox="0 0 12 16"><circle cx="2.500" cy="6" r="1.500" stroke-width="1.500"/><path d="M9 8h2.500v3L9 13.500z" fill="#1769cf"/></svg>
  <svg class="ml-3 h-4 w-3 shrink-0" viewBox="0 0 12 16"><rect x="3.500" y="0" width="5" height="9" rx="2.500" fill="#1769cf" stroke="none"/><path d="M.800 6c0 7 10.400 7 10.400 0M6 11v2M4 15h4" stroke-width="1.500"/></svg>
  <svg class="ml-[10px] h-3 w-4 shrink-0" viewBox="0 0 16 12"><rect x="1" y="1" width="14" height="10" rx="1" stroke-width="1.500"/><path d="M3 4h10M3 6.500h10" stroke-dasharray="2 1" stroke-width="1.500"/><path d="M5 9h6"/></svg>
  <svg class="ml-[9px] size-[14px] shrink-0" viewBox="0 0 14 14" fill="#6a63d8" stroke="none"><rect width="6" height="6" rx="2"/><rect x="9" y="1" width="4" height="4" rx="1" fill="none" stroke="#4a6fe0" stroke-width="2"/><rect y="8" width="6" height="6" rx="2" fill="#8c6bb0"/><rect x="8" y="8" width="6" height="6" rx="2"/></svg>
</div>

<!-- Site mark -->
<div class="pointer-events-none absolute bottom-1 right-3 z-30 flex items-center">
  <svg class="h-[54px] w-[84px]" viewBox="0 0 84 54" stroke="none"><path d="M18 0l14 18 22-10-14 16 6 16-16-9L0 49l22-24z" fill="#fff" opacity=".6"/><path d="M80 8C58 4 38 22 41 39c6 8 20 5 26-6-10 4-18 2-16-5 3-9 14-17 29-20z" fill="#5d9dcf" opacity=".85"/><path d="M52 29c10-7 20-6 24-2 4 8-6 20-20 24-6 0-6-3-2-6 8-2 14-7 15-14-4-4-10-4-17-2z" fill="#62b48c" opacity=".85"/><path d="M46 51c8-1 14-3 20-8l-4 8c-5 2-12 2-16 0z" fill="#e2d040" opacity=".8"/></svg>
  <div class="whitespace-nowrap">
    <p class="text-[21px] font-bold leading-6 text-[#5f9fd8]/80">极光下载站</p>
    <p class="font-['Liberation_Sans',sans-serif] text-base font-bold leading-5 text-[#4cb868]/80">www.xz7.com</p>
  </div>
</div>
</body>
</html>
